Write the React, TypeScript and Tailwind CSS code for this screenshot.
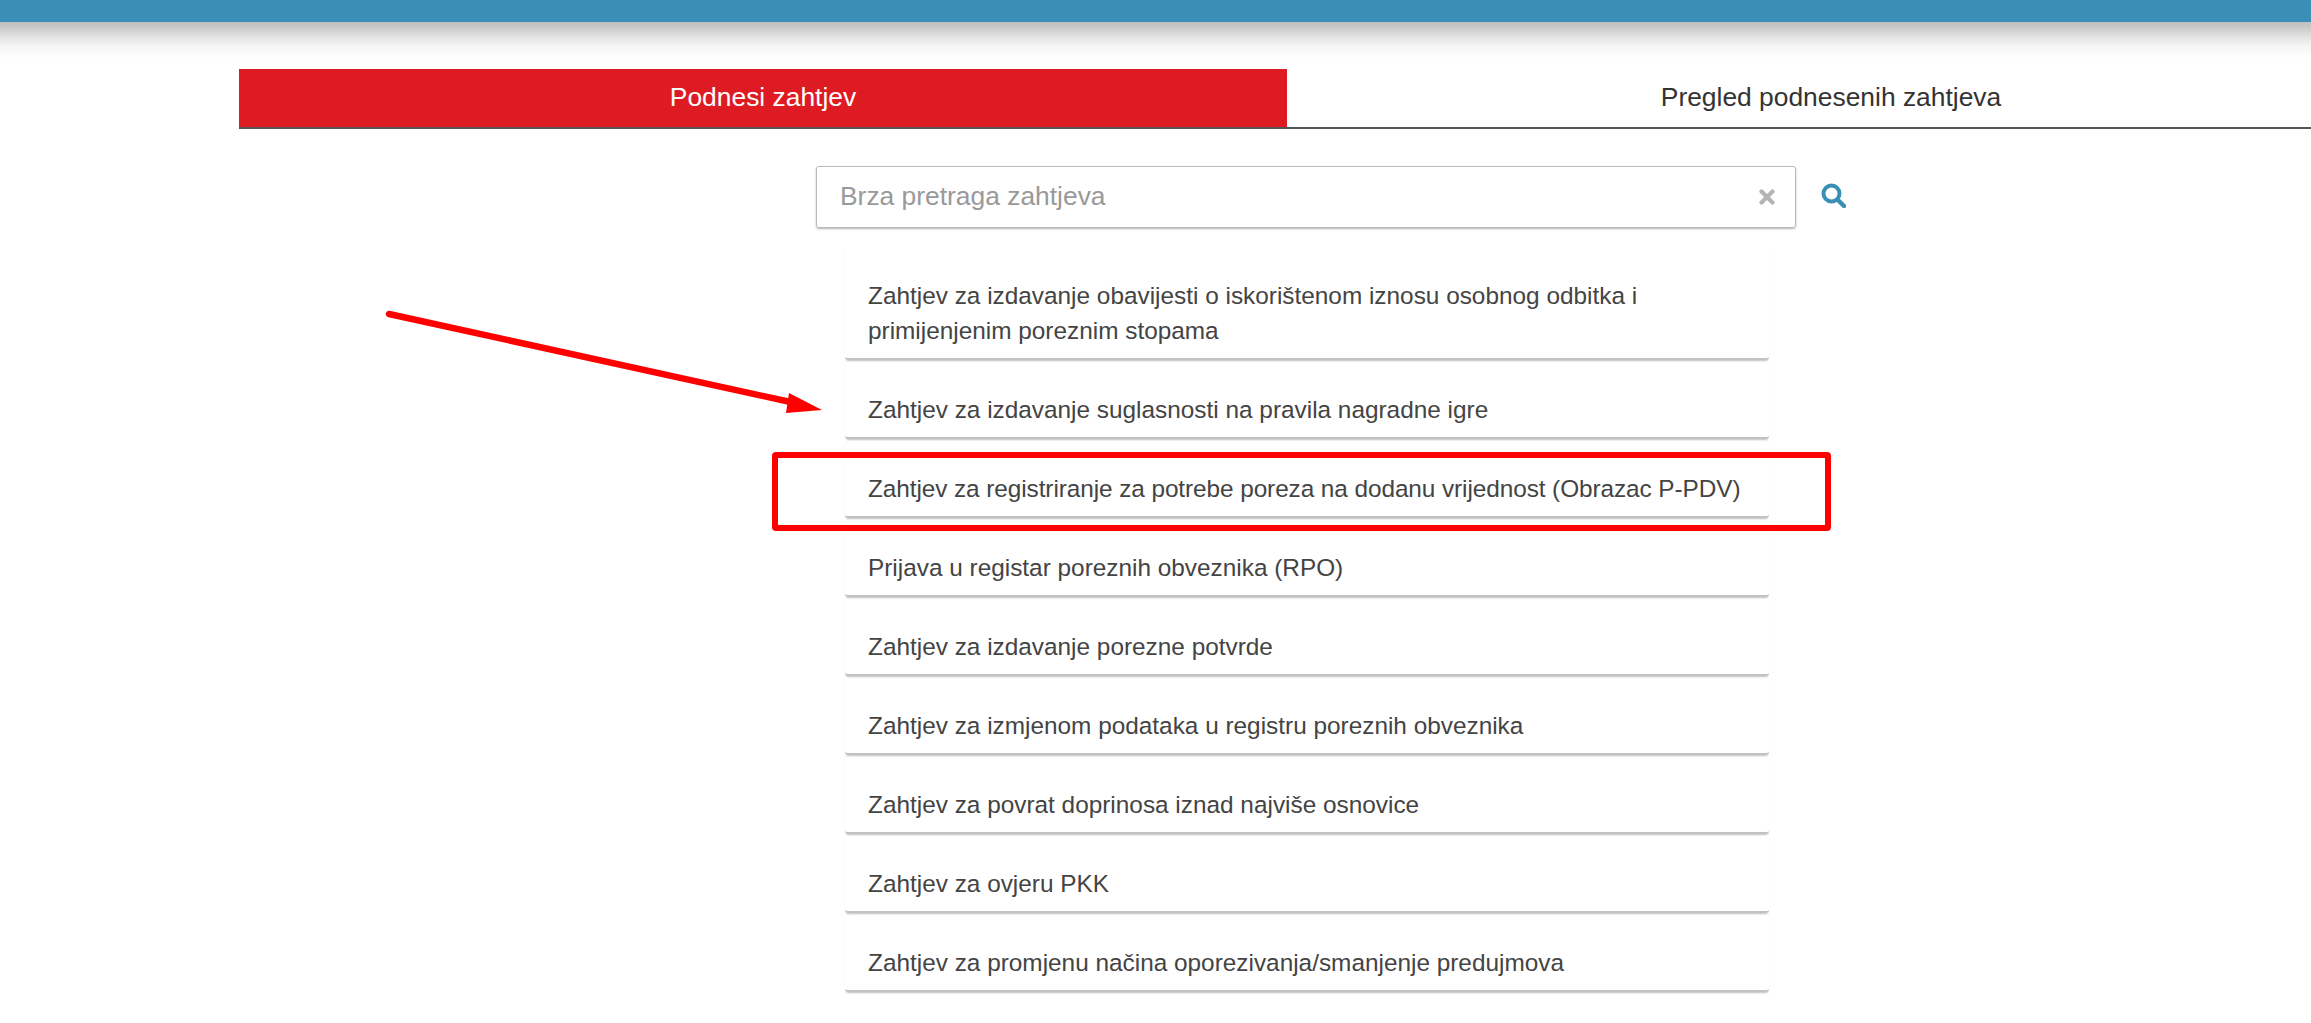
// Zahtjevi — list of request types with tabs, quick search and two red annotations on top.

const ITEMS = [
  { label: 'Zahtjev za izdavanje obavijesti o iskorištenom iznosu osobnog odbitka i primijenjenim poreznim stopama' },
  { label: 'Zahtjev za izdavanje suglasnosti na pravila nagradne igre' },
  // This row sets a touch narrower than the others in the picture.
  { label: 'Zahtjev za registriranje za potrebe poreza na dodanu vrijednost (Obrazac P-PDV)', tracking: 'tracking-[-0.08px]' },
  { label: 'Prijava u registar poreznih obveznika (RPO)' },
  { label: 'Zahtjev za izdavanje porezne potvrde' },
  { label: 'Zahtjev za izmjenom podataka u registru poreznih obveznika' },
  { label: 'Zahtjev za povrat doprinosa iznad najviše osnovice' },
  { label: 'Zahtjev za ovjeru PKK' },
  { label: 'Zahtjev za promjenu načina oporezivanja/smanjenje predujmova' },
];

function SearchIcon() {
  return (
    <svg width="25" height="25" viewBox="0 0 25 25" className="block" fill="none" stroke="#3a8fb7">
      <circle cx="10.5" cy="10.5" r="8" strokeWidth="4" />
      <path d="M16.5 16.5 L23 23" strokeWidth="4.5" strokeLinecap="round" />
    </svg>
  );
}

function ClearIcon() {
  return (
    <svg width="16" height="16" viewBox="0 0 16 16" className="block" fill="none" stroke="#b4b4b4">
      <path d="M2.5 2.5 L13.5 13.5 M13.5 2.5 L2.5 13.5" strokeWidth="4.2" strokeLinecap="round" />
    </svg>
  );
}

export default function App() {
  return (
    <div className="relative h-[1023px] overflow-hidden bg-white font-['Liberation_Sans',Arial,sans-serif]">
      {/* Bar runs past the page edges so its shadow doesn't fade at the sides */}
      <div className="-mx-[60px] h-[22px] bg-[#3a8fb7] shadow-[0_4px_30px_rgba(0,0,0,0.5)]" />

      <div className="mt-[47px] ml-[239px] flex w-[2136px] border-b-2 border-[#555]">
        <div className="flex h-[58px] w-[1048px] shrink-0 items-center justify-center bg-[#de1b22] text-[26.4px] text-white">
          Podnesi zahtjev
        </div>
        <div className="flex h-[58px] w-[1088px] shrink-0 items-center justify-center text-[26.4px] text-[#333]">
          Pregled podnesenih zahtjeva
        </div>
      </div>

      <div className="mt-[37px] ml-[816px] flex items-center">
        <div className="flex h-[62px] w-[980px] items-center justify-between rounded-[3px] border border-[#bbb] pr-[20px] pl-[23px] shadow-[0_1px_2px_rgba(0,0,0,0.3)]">
          <span className="text-[26.4px] text-[#999]">Brza pretraga zahtjeva</span>
          <ClearIcon />
        </div>
        <div className="mb-[3px] ml-[25px]">
          <SearchIcon />
        </div>
      </div>

      <ul className="mt-[18px] ml-[845px] flex w-[924px] flex-col">
        {ITEMS.map((item) => (
          <li
            key={item.label}
            className={`rounded-b-[3px] border-b-2 border-[#c2c2c2] pt-[32px] pr-[10px] pb-[10px] pl-[23px] text-[24.37px] leading-[35px] text-[#444] shadow-[0_2px_2px_-1px_rgba(0,0,0,0.25)] ${item.tracking ?? ''}`}
          >
            {item.label}
          </li>
        ))}
      </ul>

      {/* Red annotations drawn over the list */}
      <div className="absolute top-[452px] left-[772px] h-[79px] w-[1059px] rounded-[4px] border-[6px] border-[#ff0000]" />
      <svg className="absolute top-0 left-0" width="2311" height="1023" fill="none">
        <path d="M389 314 L795 403" stroke="#ff0000" strokeWidth="6.5" strokeLinecap="round" />
        <path d="M789 393 L822 410 L786 413 Z" fill="#ff0000" />
      </svg>
    </div>
  );
}
